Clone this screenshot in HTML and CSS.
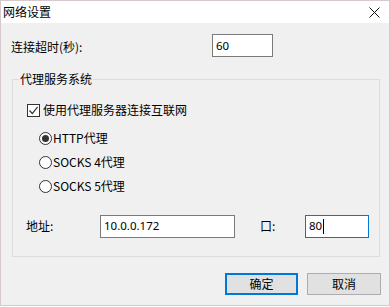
FILE: index.html
```html
<!DOCTYPE html>
<html lang="zh-CN">
<head>
<meta charset="utf-8">
<title>网络设置</title>
<link rel="stylesheet" href="styles.css">
</head>
<body>
<div class="window">
  <div class="titlebar">
    <span class="title">网络设置</span>
    <span class="close">
      <svg width="11" height="11" viewBox="0 0 11 11"><path d="M0.5 0.5 L10.5 10.5 M10.5 0.5 L0.5 10.5" stroke="#111" stroke-width="1" fill="none"/></svg>
    </span>
  </div>
  <div class="content">
    <div class="row timeout">
      <span class="label timeout-label">连接超时(秒):</span>
      <span class="input timeout-input">60</span>
    </div>
    <div class="group">
      <span class="legend">代理服务系统</span>
      <div class="row check-row">
        <span class="checkbox">
          <svg width="11" height="11" viewBox="0 0 11 11"><path d="M1.5 5.5 L4.3 8.5 L9.6 1.8" stroke="#333" stroke-width="1.2" fill="none"/></svg>
        </span>
        <span class="label">使用代理服务器连接互联网</span>
      </div>
      <div class="row radio-row">
        <span class="radio checked"><span class="dot"></span></span>
        <span class="label">HTTP代理</span>
      </div>
      <div class="row radio-row">
        <span class="radio"></span>
        <span class="label">SOCKS 4代理</span>
      </div>
      <div class="row radio-row">
        <span class="radio"></span>
        <span class="label">SOCKS 5代理</span>
      </div>
      <div class="row addr-row">
        <span class="label addr-label">地址:</span>
        <span class="input addr-input">10.0.0.172</span>
        <span class="label port-label">口:</span>
        <span class="input port-input focused">80<span class="caret"></span></span>
      </div>
    </div>
    <div class="buttons">
      <span class="button default">确定</span>
      <span class="button">取消</span>
    </div>
  </div>
</div>
</body>
</html>
```

FILE: styles.css
```css
* { box-sizing: border-box; }
html, body { margin: 0; padding: 0; }
body {
  width: 390px;
  height: 307px;
  font-family: "Noto Sans CJK SC", "Noto Sans", sans-serif;
  font-size: 12px;
  color: #000;
  background: #ffffff;
}
.window {
  width: 390px;
  height: 306px;
  border: 1px solid #d6c9cc;
  background: #f0f0f0;
  display: flex;
  flex-direction: column;
}
.titlebar {
  height: 22px;
  background: #ffffff;
  display: flex;
  align-items: center;
  justify-content: space-between;
  padding-left: 2px;
  padding-right: 8px;
  flex: none;
}
.title {
  font-size: 12px;
  line-height: 16px;
}
.close {
  display: flex;
  width: 11px;
  height: 11px;
  margin-right: 1px;
}
.content {
  flex: 1;
  padding-top: 11px;
}
.row {
  display: flex;
  align-items: center;
}
.label {
  line-height: 16px;
  white-space: nowrap;
}
.timeout {
  height: 23px;
  padding-left: 10px;
}
.timeout-label {
  width: 201px;
  padding-top: 2px;
}
.input {
  display: flex;
  align-items: center;
  height: 23px;
  background: #ffffff;
  border: 1px solid #7a7a7a;
  padding-left: 3px;
  font-family: "Noto Sans", "Noto Sans CJK SC", sans-serif;
  font-size: 11.5px;
  line-height: 14px;
}
.timeout-input { width: 61px; }
.group {
  position: relative;
  margin-top: 22px;
  margin-left: 11px;
  width: 368px;
  height: 178px;
  border: 1px solid #dcdcdc;
  padding-top: 18px;
}
.legend {
  position: absolute;
  top: -9px;
  left: 6px;
  padding: 0 1px;
  background: #f0f0f0;
  line-height: 16px;
}
.check-row {
  height: 24px;
  padding-left: 14px;
}
.checkbox {
  width: 13px;
  height: 13px;
  border: 1px solid #333;
  background: #fff;
  display: flex;
  align-items: center;
  justify-content: center;
  margin-right: 3px;
}
.radio-row {
  height: 24px;
  padding-left: 26px;
}
.check-row + .radio-row { margin-top: 4px; }
.radio {
  width: 13px;
  height: 13px;
  border: 1px solid #333;
  border-radius: 50%;
  background: #fff;
  display: flex;
  align-items: center;
  justify-content: center;
  margin-right: 1px;
}
.radio .dot {
  width: 7px;
  height: 7px;
  border-radius: 50%;
  background: #333;
}
.radio-row .label {
  font-family: "Noto Sans CJK SC", sans-serif;
}
.addr-row {
  margin-top: 16px;
  height: 24px;
  padding-left: 13px;
}
.addr-label { width: 74px; }
.addr-input { width: 135px; }
.port-label { width: 45px; margin-left: 25px; }
.port-input { width: 64px; }
.focused { border-color: #0078d7; }
.caret {
  display: inline-block;
  width: 1px;
  height: 15px;
  background: #000;
  margin-left: 1px;
}
.buttons {
  display: flex;
  justify-content: flex-end;
  gap: 9px;
  margin-top: 16px;
  padding-right: 8px;
}
.button {
  display: flex;
  align-items: center;
  justify-content: center;
  width: 74px;
  height: 22px;
  background: #e1e1e1;
  border: 1px solid #adadad;
  line-height: 16px;
}
.button.default {
  width: 73px;
  border: 2px solid #0078d7;
}
```
